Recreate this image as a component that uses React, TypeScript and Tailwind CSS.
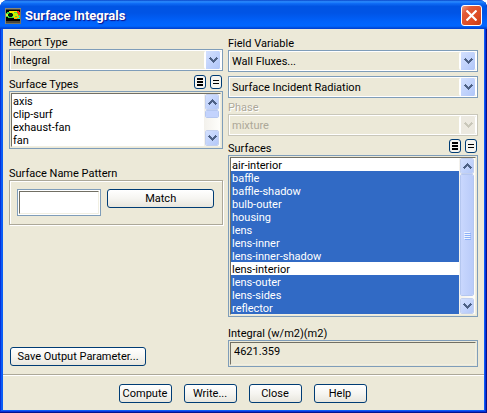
import type { ReactNode } from "react";

const SURFACE_TYPES = ["axis", "clip-surf", "exhaust-fan", "fan"];

const SURFACES = [
  "air-interior",
  "baffle",
  "baffle-shadow",
  "bulb-outer",
  "housing",
  "lens",
  "lens-inner",
  "lens-inner-shadow",
  "lens-interior",
  "lens-outer",
  "lens-sides",
  "reflector",
];

const SELECTED = SURFACES.filter((s) => !s.endsWith("-interior"));

/* ==================== DIALOG ==================== */

export default function App() {
  return (
    <div className="min-h-screen bg-white font-['Roboto',sans-serif] text-[11px] leading-[13px] text-black">
      <div className="flex min-h-screen flex-col rounded-t-lg bg-[#0a5cf5] px-[3px] pb-[3px] shadow-[inset_-1px_-1px_0_#00138c,inset_-2px_-2px_0_#0831d9,inset_1px_0_0_#0831d9]">
        <TitleBar />

        <main className="flex flex-1 flex-col bg-[#ece9d8]">
          <div className="grid flex-1 grid-cols-[214fr_250fr] gap-x-[5px] px-1.5 pb-[7px]">
            {/* left column */}
            <div className="flex min-w-0 flex-col pt-1.5">
              <Label htmlFor="report-type">Report Type</Label>
              <Combo id="report-type" value="Integral" />

              <ListHeader id="surface-types" className="mt-1">
                Surface Types
              </ListHeader>
              <ListBox
                id="surface-types"
                items={SURFACE_TYPES}
                selected={[]}
                thumb={<span className="h-2 rounded-xs border border-white bg-[#c3d3fd] outline-1 -outline-offset-1 outline-[#b5c7f0]" />}
              />

              <Label htmlFor="pattern" className="mt-[17px]">
                Surface Name Pattern
              </Label>
              <div className="flex items-start gap-1.5 border border-[#aca899] py-2 pr-2 pl-[7px] shadow-[inset_1px_1px_0_#fff,1px_1px_0_#fff]">
                <SunkenInput id="pattern" className="min-w-0 flex-[83] bg-white" />
                <PushButton className="min-w-0 flex-[108]">Match</PushButton>
              </div>

              <PushButton className="mt-auto mb-px ml-px w-[136px]">
                Save Output Parameter...
              </PushButton>
            </div>

            {/* right column */}
            <div className="flex min-w-0 flex-col pt-[7px]">
              <Label htmlFor="field-variable">Field Variable</Label>
              <Combo id="field-variable" value="Wall Fluxes..." />
              <Combo
                id="field-quantity"
                label="Field quantity"
                value="Surface Incident Radiation"
                className="mt-1"
              />

              <Label htmlFor="phase" disabled className="mt-0.5">
                Phase
              </Label>
              <Combo id="phase" value="mixture" disabled />

              <ListHeader id="surfaces" className="mt-[3px]">
                Surfaces
              </ListHeader>
              <ListBox
                id="surfaces"
                items={SURFACES}
                selected={SELECTED}
                thumb={
                  <span className="flex h-[122px] flex-col items-center justify-center gap-px rounded-xs border border-white bg-linear-to-r from-[#c9d7fd] to-[#b9cbf9] outline-1 -outline-offset-1 outline-[#b5c7f0]">
                    <i className="h-px w-1.5 bg-[#eef4fe] shadow-[1px_1px_0_#8cb0f8]" />
                    <i className="h-px w-1.5 bg-[#eef4fe] shadow-[1px_1px_0_#8cb0f8]" />
                    <i className="h-px w-1.5 bg-[#eef4fe] shadow-[1px_1px_0_#8cb0f8]" />
                    <i className="h-px w-1.5 bg-[#eef4fe] shadow-[1px_1px_0_#8cb0f8]" />
                  </span>
                }
              />

              <Label htmlFor="integral" className="mt-[9px]">
                Integral (w/m2)(m2)
              </Label>
              <SunkenInput id="integral" value="4621.359" className="bg-[#ece9d8]" />
            </div>
          </div>

          <footer className="flex justify-center gap-3 border-t border-[#aca899] pt-[9px] pr-0.5 pb-[7px] shadow-[inset_0_1px_0_#fff]">
            <PushButton className="w-[53px]">Compute</PushButton>
            <PushButton className="w-[53px]">Write...</PushButton>
            <PushButton className="w-[53px]">Close</PushButton>
            <PushButton className="w-[53px]">Help</PushButton>
          </footer>
        </main>
      </div>
    </div>
  );
}

function TitleBar() {
  return (
    <header className="-mx-[3px] flex h-[29px] shrink-0 items-center gap-1 rounded-t-lg bg-[linear-gradient(to_bottom,#0a45c8_0%,#2a8cff_6%,#0f6cf5_12%,#0054e3_22%,#0054e6_45%,#0062fb_75%,#0066ff_90%,#0050e0_95%,#003dd0_100%)] pr-[5px] pl-[5px] pt-0.5">
      <AppIcon />
      <h1 className="flex-1 text-[13px] leading-4 font-bold text-white [text-shadow:1px_1px_1px_#0f1089]">
        Surface Integrals
      </h1>
      <button
        type="button"
        aria-label="Close window"
        className="flex size-[21px] items-center justify-center rounded-[3px] border border-white bg-[linear-gradient(135deg,#eba087_0%,#e25b38_25%,#dc4a22_70%,#c33c14_100%)]"
      >
        <svg viewBox="0 0 11 11" className="size-[11px]" stroke="#fff" strokeWidth="2.2">
          <path d="M0.5 0.5 10.5 10.5M10.5 0.5 0.5 10.5" />
        </svg>
      </button>
    </header>
  );
}

// contour plot thumbnail in a bevelled frame
function AppIcon() {
  return (
    <svg viewBox="0 0 16 16" className="size-4" shapeRendering="crispEdges" aria-hidden="true">
      <rect width="16" height="16" fill="#4a463c" />
      <path d="M0 0H16V1H1V16H0Z" fill="#8a8672" />
      <path d="M15 1H16V16H1V15H15Z" fill="#77735f" />
      <rect x="1" y="2" width="14" height="11" fill="#000" />
      <path d="M1 5H2V4H4V3H14V4H15V10H14V11H10V10H3V9H1Z" fill="#3fe03a" />
      <path d="M4 3H12V4H9V5H5V4H4Z" fill="#ffe600" />
      <path d="M8 5H12V6H13V8H10V9H8Z" fill="#c8f000" />
      <path d="M12 3H14V4H15V7H13V5H12Z" fill="#ff3a10" />
      <path d="M9 9H12V8H14V10H12V11H9Z" fill="#ffb400" />
      <path d="M13 10H15V9H14V8H15V11H13Z" fill="#20d8d0" />
      <path d="M4 5H7V6H8V8H7V9H4V8H3V6H4Z" fill="#04180a" />
      <path d="M1 6H3V8H1Z" fill="#e8f23c" />
    </svg>
  );
}

/* ==================== CONTROLS ==================== */

type LabelProps = {
  htmlFor: string;
  children: ReactNode;
  className?: string;
  disabled?: boolean;
};

function Label({ htmlFor, children, className = "", disabled }: LabelProps) {
  const tone = disabled ? "text-[#aca899] [text-shadow:1px_1px_0_#fff]" : "";
  return (
    <label
      htmlFor={htmlFor}
      className={`h-3.5 leading-[15px] whitespace-nowrap ${tone} ${className}`}
    >
      {children}
    </label>
  );
}

function Chevron({ up, muted }: { up?: boolean; muted?: boolean }) {
  return (
    <svg
      viewBox="0 0 9 6"
      className="h-1.5 w-[9px]"
      fill={muted ? "#c9c7ba" : "#4d6185"}
      shapeRendering="crispEdges"
      aria-hidden="true"
    >
      <path
        d={
          up
            ? "M4 0H5V1H6V2H7V3H8V4H9V5H8V6H7V5H6V4H5V3H4V4H3V5H2V6H1V5H0V4H1V3H2V2H3V1H4Z"
            : "M1 0H2V1H3V2H4V3H5V2H6V1H7V0H8V1H9V2H8V3H7V4H6V5H5V6H4V5H3V4H2V3H1V2H0V1H1Z"
        }
      />
    </svg>
  );
}

type ComboProps = {
  id: string;
  value: string;
  label?: string;
  className?: string;
  disabled?: boolean;
};

function Combo({ id, value, label, className = "", disabled }: ComboProps) {
  return (
    <div
      className={`relative h-[22px] border ${disabled ? "border-[#c9c7ba]" : "border-[#7f9db9]"} ${className}`}
    >
      <select
        id={id}
        aria-label={label}
        disabled={disabled}
        className="block size-full appearance-none border border-white bg-[#ece9d8] pr-5 pl-0.5 disabled:text-[#aca899] disabled:opacity-100"
      >
        <option>{value}</option>
      </select>
      {/* drop-down arrow laid over the native control */}
      <span
        className={`pointer-events-none absolute inset-y-px right-px flex w-[17px] items-center justify-center rounded-xs border-x-2 border-r border-white ${
          disabled ? "bg-[#ece9e0]" : "bg-linear-to-br from-[#d3e0fe] to-[#b0c6f9]"
        }`}
      >
        <Chevron muted={disabled} />
      </span>
    </div>
  );
}

type ListHeaderProps = { id: string; children: ReactNode; className?: string };

function ListHeader({ id, children, className = "" }: ListHeaderProps) {
  return (
    <div className={`flex h-4 items-start gap-1 pr-px ${className}`}>
      <label htmlFor={id} className="mt-0.5 flex-1 leading-[15px]">
        {children}
      </label>
      <SmallButton label="Select all">
        <path d="M0 0H6V2H0ZM0 3H6V5H0ZM0 6H6V8H0Z" />
      </SmallButton>
      <SmallButton label="Deselect all">
        <path d="M0 2H6V3H0ZM0 5H6V6H0Z" />
      </SmallButton>
    </div>
  );
}

function SmallButton({ label, children }: { label: string; children: ReactNode }) {
  return (
    <button
      type="button"
      aria-label={label}
      className="flex h-3.5 w-3 items-center justify-center rounded-[3px] border border-[#003c74] bg-[#f6f5f0]"
    >
      <svg viewBox="0 0 6 8" className="h-2 w-1.5" shapeRendering="crispEdges">
        {children}
      </svg>
    </button>
  );
}

type ListBoxProps = {
  id: string;
  items: string[];
  selected: string[];
  thumb: ReactNode;
};

function ListBox({ id, items, selected, thumb }: ListBoxProps) {
  return (
    <div className="border border-[#7f9db9] p-px">
      <div className="flex border border-t-[#716f64] border-r-[#f1efe2] border-b-[#f1efe2] border-l-[#716f64] bg-white">
        <select
          id={id}
          multiple
          size={items.length}
          defaultValue={selected}
          className="block min-w-0 flex-1 overflow-hidden rounded-none border-0 bg-white p-0 [scrollbar-width:none]"
        >
          {items.map((item) => (
            <option
              key={item}
              className="h-[13px] min-h-0 p-0 px-px pt-px leading-[13px] text-black checked:bg-[#316ac5] checked:text-white"
            >
              {item}
            </option>
          ))}
        </select>
        <div className="flex w-4 flex-col bg-linear-to-r from-[#f3f1ec] to-[#fefefb] px-px">
          <ScrollButton label="Scroll up" up />
          {thumb}
          <span className="flex-1" />
          <ScrollButton label="Scroll down" />
        </div>
      </div>
    </div>
  );
}

function ScrollButton({ label, up }: { label: string; up?: boolean }) {
  return (
    <button
      type="button"
      aria-label={label}
      className="flex h-4 w-full shrink-0 items-center justify-center rounded-xs border border-white bg-linear-to-br from-[#d3e0fe] to-[#b4c8f8] outline-1 -outline-offset-1 outline-[#c3d0ee]"
    >
      <Chevron up={up} />
    </button>
  );
}

type SunkenInputProps = { id: string; value?: string; className: string };

function SunkenInput({ id, value, className }: SunkenInputProps) {
  return (
    <div className={`h-[27px] border border-[#7f9db9] p-px ${className}`}>
      <input
        id={id}
        type="text"
        defaultValue={value}
        readOnly={value !== undefined}
        className="block size-full border border-t-[#716f64] border-r-[#f1efe2] border-b-[#f1efe2] border-l-[#716f64] bg-transparent px-[3px] pb-1"
      />
    </div>
  );
}

function PushButton({ children, className }: { children: ReactNode; className: string }) {
  return (
    <button
      type="button"
      className={`h-[19px] rounded-[3px] border border-[#003c74] bg-linear-to-b from-white via-[#f6f5f1] to-[#e8e6dd] whitespace-nowrap ${className}`}
    >
      {children}
    </button>
  );
}
